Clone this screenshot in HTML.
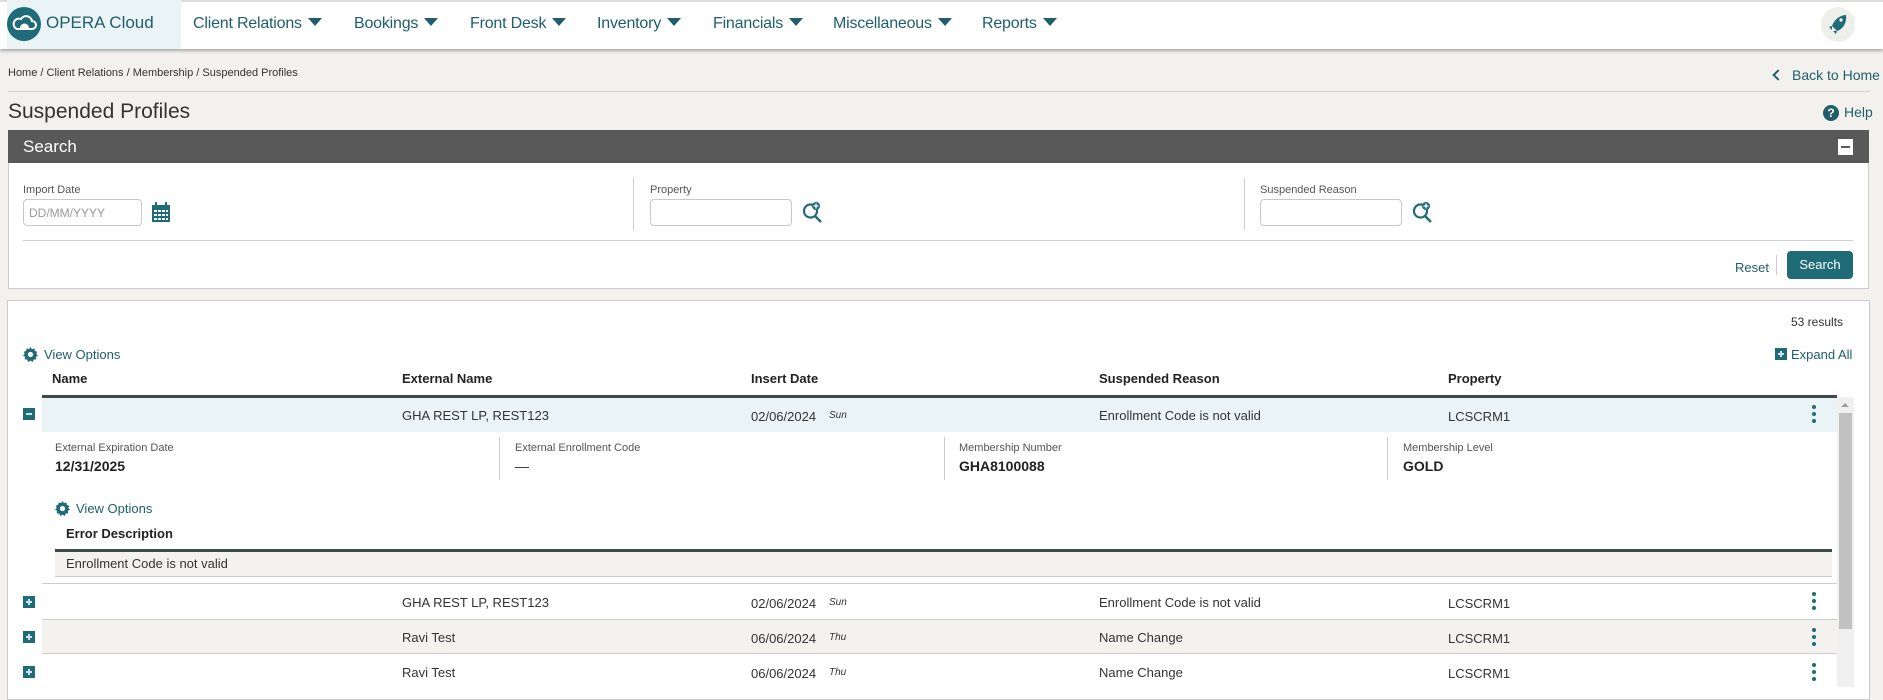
<!DOCTYPE html>
<html><head><meta charset="utf-8"><style>
*{box-sizing:border-box;margin:0;padding:0}
body{width:1883px;height:681px;overflow:hidden;background:#f2f1ee;font-family:"Liberation Sans",sans-serif;color:#333;position:relative}
.a{position:absolute;white-space:nowrap}
.nav{position:absolute;left:0;top:0;width:1883px;height:49px;background:#fff;border-top:2px solid #ddd;box-shadow:0 2px 3px rgba(0,0,0,.3)}
.mi{position:absolute;top:13px;font-size:16px;color:#1f5e6b;letter-spacing:-0.2px}
.mi:after{content:"";display:inline-block;margin-left:6px;border-left:7px solid transparent;border-right:7px solid transparent;border-top:8px solid #1f5e6b;vertical-align:2px}
.lbl{font-size:11px;color:#555}
.inp{position:absolute;height:27px;border:1px solid #c8c8c8;border-radius:4px;background:#fff}
.teal{color:#1f5e6b}
.th{font-size:13px;font-weight:bold;color:#222;top:371px}
.cell{font-size:13px;color:#333}
.day{font-size:10px;font-style:italic;color:#333}
.pm{position:absolute;width:12px;height:12px;background:#1f6b78}
.pm:before{content:"";position:absolute;left:3px;top:5px;width:6px;height:2px;background:#cfe3e6}
.pm.p:after{content:"";position:absolute;left:5px;top:3px;width:2px;height:6px;background:#cfe3e6}
.keb{position:absolute;width:4px}
.keb i{display:block;width:4px;height:4px;border-radius:2px;background:#1f6b78;margin-bottom:3px}
</style></head><body>
<div class="nav">
 <div class="a" style="left:7px;top:-2px;width:174px;height:49px;background:#eaf3f6"></div>
 <svg class="a" style="left:7px;top:5px" width="34" height="34" viewBox="0 0 34 34"><circle cx="17" cy="17" r="17" fill="#1f6b78"/><path d="M10 22h15a4 4 0 0 0 0-8 6 6 0 0 0-11-2 5 5 0 0 0-4 10z" fill="none" stroke="#fff" stroke-width="2"/><path d="M13 21a4.5 4.5 0 0 1 9 0z" fill="#fff"/></svg>
 <div class="a" style="left:46px;top:11px;font-size:17px;color:#1f5e6b">OPERA Cloud</div>
 <div class="mi" style="left:193px">Client Relations</div>
 <div class="mi" style="left:354px">Bookings</div>
 <div class="mi" style="left:470px">Front Desk</div>
 <div class="mi" style="left:597px">Inventory</div>
 <div class="mi" style="left:713px">Financials</div>
 <div class="mi" style="left:833px">Miscellaneous</div>
 <div class="mi" style="left:982px">Reports</div>
 <div class="a" style="left:1821px;top:5px;width:34px;height:35px;border-radius:17px;background:#eeeeea"></div>
 <svg class="a" style="left:1828px;top:12px" width="20" height="22" viewBox="0 0 20 22"><path d="M18 1C12 1 6 6 4 12l5 5c6-2 10-8 9-16z" fill="#1f6b78"/><path d="M4 12l-3 1 3 3zM9 17l-1 3-3-3z" fill="#1f6b78"/><circle cx="13" cy="6" r="1.6" fill="#fff"/></svg>
</div>
<div class="a" style="left:8px;top:67px;font-size:11px">Home / Client Relations / Membership / Suspended Profiles</div>
<div class="a teal" style="left:1774px;top:67px;font-size:14px"><span style="display:inline-block;width:8px;height:8px;border-left:2px solid #1f5e6b;border-bottom:2px solid #1f5e6b;transform:rotate(45deg);margin-right:10px;vertical-align:1px"></span>Back to Home</div>
<div class="a" style="left:8px;top:91px;width:1862px;height:1px;background:#d0d0d0"></div>
<div class="a" style="left:8px;top:100px;font-size:21px;color:#333">Suspended Profiles</div>
<div class="a" style="left:1823px;top:105px;width:16px;height:16px;border-radius:8px;background:#1f5e6b;color:#fff;font-size:12px;font-weight:bold;text-align:center;line-height:16px">?</div>
<div class="a teal" style="left:1844px;top:104px;font-size:14px">Help</div>
<div class="a" style="left:8px;top:130px;width:1861px;height:159px;background:#fff;border:1px solid #ccc"></div>
<div class="a" style="left:8px;top:130px;width:1861px;height:33px;background:#595959"></div>
<div class="a" style="left:23px;top:137px;font-size:17px;color:#fff">Search</div>
<div class="a" style="left:1838px;top:139px;width:15px;height:16px;background:#fff"><div style="margin:7px 3px;height:2px;background:#595959"></div></div>
<div class="a lbl" style="left:23px;top:184px">Import Date</div>
<div class="inp" style="left:23px;top:199px;width:119px"></div>
<div class="a" style="left:29px;top:206px;font-size:12px;color:#999">DD/MM/YYYY</div>
<svg class="a" style="left:152px;top:202px" width="18" height="20" viewBox="0 0 18 20"><rect x="0" y="3" width="18" height="17" fill="#1f6b78"/><rect x="3" y="0" width="2" height="5" fill="#1f6b78"/><rect x="13" y="0" width="2" height="5" fill="#1f6b78"/><g fill="#fff"><rect x="2" y="8" width="3" height="2"/><rect x="6" y="8" width="3" height="2"/><rect x="10" y="8" width="3" height="2"/><rect x="14" y="8" width="2" height="2"/><rect x="2" y="12" width="3" height="2"/><rect x="6" y="12" width="3" height="2"/><rect x="10" y="12" width="3" height="2"/><rect x="14" y="12" width="2" height="2"/><rect x="2" y="16" width="3" height="2"/><rect x="6" y="16" width="3" height="2"/><rect x="10" y="16" width="3" height="2"/><rect x="14" y="16" width="2" height="2"/></g></svg>
<div class="a" style="left:633px;top:178px;width:1px;height:52px;background:#ccc"></div>
<div class="a lbl" style="left:650px;top:184px">Property</div>
<div class="inp" style="left:650px;top:199px;width:142px"></div>
<svg class="a" style="left:802px;top:201px" width="22" height="22" viewBox="0 0 22 22"><circle cx="8.5" cy="10" r="6.5" fill="none" stroke="#1f6b78" stroke-width="2.2"/><path d="M13 15l6 6" stroke="#1f6b78" stroke-width="2.4"/><circle cx="14" cy="5" r="4" fill="#1f6b78"/><path d="M14 2.5v5M11.5 5h5" stroke="#fff" stroke-width="1.3"/></svg>
<div class="a" style="left:1244px;top:178px;width:1px;height:52px;background:#ccc"></div>
<div class="a lbl" style="left:1260px;top:184px">Suspended Reason</div>
<div class="inp" style="left:1260px;top:199px;width:142px"></div>
<svg class="a" style="left:1412px;top:201px" width="22" height="22" viewBox="0 0 22 22"><circle cx="8.5" cy="10" r="6.5" fill="none" stroke="#1f6b78" stroke-width="2.2"/><path d="M13 15l6 6" stroke="#1f6b78" stroke-width="2.4"/><circle cx="14" cy="5" r="4" fill="#1f6b78"/><path d="M14 2.5v5M11.5 5h5" stroke="#fff" stroke-width="1.3"/></svg>
<div class="a" style="left:23px;top:240px;width:1830px;height:1px;background:#d0d0d0"></div>
<div class="a teal" style="left:1735px;top:260px;font-size:13px">Reset</div>
<div class="a" style="left:1776px;top:255px;width:1px;height:20px;background:#ccc"></div>
<div class="a" style="left:1787px;top:251px;width:66px;height:28px;background:#1f6b78;border-radius:4px;color:#fff;font-size:13px;text-align:center;line-height:27px">Search</div>
<div class="a" style="left:7px;top:300px;width:1863px;height:400px;background:#fff;border:1px solid #ccc"></div>
<div class="a" style="left:1791px;top:315px;font-size:12px">53 results</div>
<svg class="a" style="left:23px;top:347px" width="15" height="15" viewBox="0 0 16 16"><path d="M8 0l1.5 2.2 2.6-.8.5 2.7 2.6.9-1 2.5L16 9l-2.3 1.5.5 2.7-2.7.1L10.4 16 8 14.5 5.6 16l-1.1-2.7-2.7-.1.5-2.7L0 9l1.8-1.5-1-2.5 2.6-.9.5-2.7 2.6.8z" fill="#1f6b78"/><circle cx="8" cy="8" r="2.8" fill="#fff"/></svg>
<div class="a teal" style="left:44px;top:347px;font-size:13px">View Options</div>
<div class="pm p" style="left:1775px;top:348px"></div>
<div class="a teal" style="left:1791px;top:347px;font-size:13px">Expand All</div>
<div class="a th" style="left:52px">Name</div>
<div class="a th" style="left:402px">External Name</div>
<div class="a th" style="left:751px">Insert Date</div>
<div class="a th" style="left:1099px">Suspended Reason</div>
<div class="a th" style="left:1448px">Property</div>
<div class="a" style="left:42px;top:395px;width:1795px;height:3px;background:#3f4a4b"></div>
<div class="a" style="left:42px;top:398px;width:1795px;height:34px;background:#eaf3f6"></div>
<div class="pm" style="left:23px;top:408px"></div>
<div class="a cell" style="left:402px;top:408px">GHA REST LP, REST123</div>
<div class="a cell" style="left:751px;top:409px">02/06/2024</div><div class="a day" style="left:829px;top:410px">Sun</div>
<div class="a cell" style="left:1099px;top:408px">Enrollment Code is not valid</div>
<div class="a cell" style="left:1448px;top:409px">LCSCRM1</div>
<div class="keb" style="left:1812px;top:405px"><i></i><i></i><i></i></div>
<div class="a lbl" style="left:55px;top:442px">External Expiration Date</div>
<div class="a" style="left:55px;top:458px;font-size:14px;font-weight:bold;color:#222">12/31/2025</div>
<div class="a" style="left:499px;top:437px;width:1px;height:43px;background:#ccc"></div>
<div class="a lbl" style="left:515px;top:442px">External Enrollment Code</div>
<div class="a" style="left:515px;top:458px;font-size:14px;color:#333">—</div>
<div class="a" style="left:944px;top:437px;width:1px;height:43px;background:#ccc"></div>
<div class="a lbl" style="left:959px;top:442px">Membership Number</div>
<div class="a" style="left:959px;top:458px;font-size:14px;font-weight:bold;color:#222">GHA8100088</div>
<div class="a" style="left:1387px;top:437px;width:1px;height:43px;background:#ccc"></div>
<div class="a lbl" style="left:1403px;top:442px">Membership Level</div>
<div class="a" style="left:1403px;top:458px;font-size:14px;font-weight:bold;color:#222">GOLD</div>
<svg class="a" style="left:55px;top:501px" width="15" height="15" viewBox="0 0 16 16"><path d="M8 0l1.5 2.2 2.6-.8.5 2.7 2.6.9-1 2.5L16 9l-2.3 1.5.5 2.7-2.7.1L10.4 16 8 14.5 5.6 16l-1.1-2.7-2.7-.1.5-2.7L0 9l1.8-1.5-1-2.5 2.6-.9.5-2.7 2.6.8z" fill="#1f6b78"/><circle cx="8" cy="8" r="2.8" fill="#fff"/></svg>
<div class="a teal" style="left:76px;top:501px;font-size:13px">View Options</div>
<div class="a" style="left:66px;top:526px;font-size:13px;font-weight:bold;color:#222">Error Description</div>
<div class="a" style="left:55px;top:549px;width:1777px;height:3px;background:#3f4a4b"></div>
<div class="a" style="left:55px;top:552px;width:1777px;height:25px;background:#f3f2ef;border-bottom:1px solid #ccc"></div>
<div class="a cell" style="left:66px;top:556px">Enrollment Code is not valid</div>
<div class="a" style="left:42px;top:583px;width:1795px;height:1px;background:#ccc"></div>
<div class="pm p" style="left:23px;top:596px"></div>
<div class="a cell" style="left:402px;top:595px">GHA REST LP, REST123</div>
<div class="a cell" style="left:751px;top:596px">02/06/2024</div><div class="a day" style="left:829px;top:597px">Sun</div>
<div class="a cell" style="left:1099px;top:595px">Enrollment Code is not valid</div>
<div class="a cell" style="left:1448px;top:596px">LCSCRM1</div>
<div class="keb" style="left:1812px;top:592px"><i></i><i></i><i></i></div>
<div class="a" style="left:42px;top:619px;width:1795px;height:35px;background:#f3f2ef;border-top:1px solid #ccc;border-bottom:1px solid #ccc"></div>
<div class="pm p" style="left:23px;top:631px"></div>
<div class="a cell" style="left:402px;top:630px">Ravi Test</div>
<div class="a cell" style="left:751px;top:631px">06/06/2024</div><div class="a day" style="left:829px;top:632px">Thu</div>
<div class="a cell" style="left:1099px;top:630px">Name Change</div>
<div class="a cell" style="left:1448px;top:631px">LCSCRM1</div>
<div class="keb" style="left:1812px;top:628px"><i></i><i></i><i></i></div>
<div class="pm p" style="left:23px;top:666px"></div>
<div class="a cell" style="left:402px;top:665px">Ravi Test</div>
<div class="a cell" style="left:751px;top:666px">06/06/2024</div><div class="a day" style="left:829px;top:667px">Thu</div>
<div class="a cell" style="left:1099px;top:665px">Name Change</div>
<div class="a cell" style="left:1448px;top:666px">LCSCRM1</div>
<div class="keb" style="left:1812px;top:663px"><i></i><i></i><i></i></div>
<div class="a" style="left:1837px;top:397px;width:17px;height:290px;background:#f0f0f0"></div>
<div class="a" style="left:1841px;top:403px;border-left:4px solid transparent;border-right:4px solid transparent;border-bottom:4px solid #a0a0a0"></div>
<div class="a" style="left:1839px;top:413px;width:13px;height:216px;background:#c1c1c1"></div>
</body></html>
